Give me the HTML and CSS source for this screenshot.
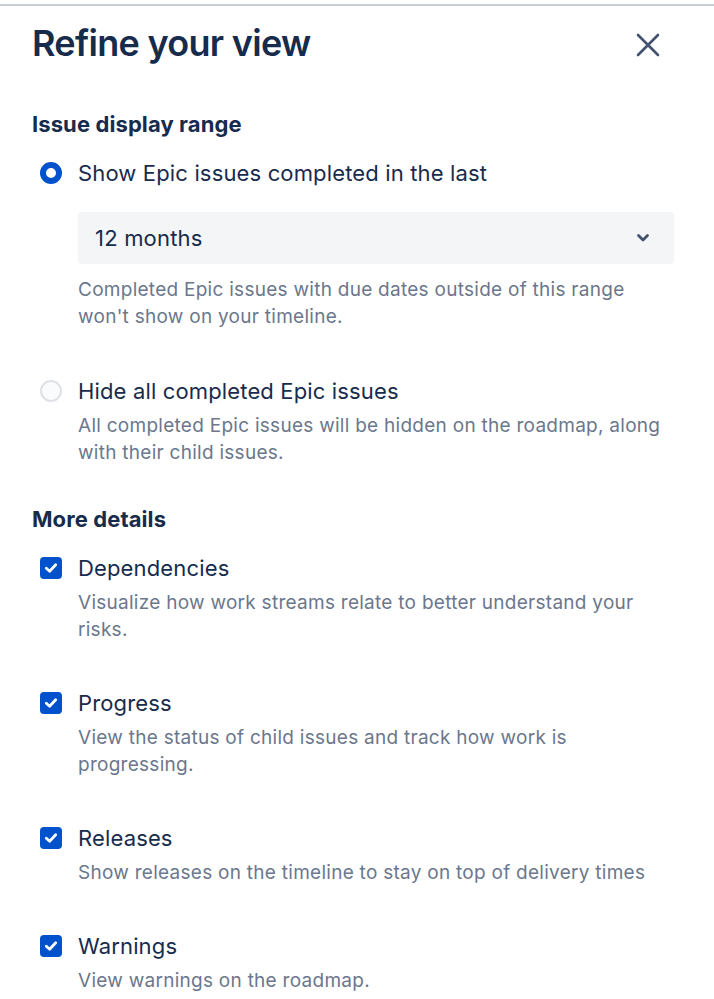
FILE: index.html
```html
<!DOCTYPE html>
<html lang="en">
<head>
<meta charset="utf-8">
<title>Refine your view</title>
<link rel="stylesheet" href="styles.css">
</head>
<body>
<div class="topline"></div>
<div class="panel">
  <header class="header">
    <h1 class="title">Refine your view</h1>
    <button class="close" aria-label="Close">
      <svg width="24" height="24" viewBox="0 0 24 24"><path d="M2 2 L22 22 M22 2 L2 22" stroke="#42526e" stroke-width="2.6" stroke-linecap="round" fill="none"/></svg>
    </button>
  </header>

  <section class="section">
    <h2 class="section-title">Issue display range</h2>
    <div class="options radio-options">
      <div class="option">
        <span class="radio radio-on"></span>
        <div class="option-body">
          <div class="option-label">Show Epic issues completed in the last</div>
          <div class="select">
            <span class="select-value">12 months</span>
            <svg class="chev" width="14" height="10" viewBox="0 0 14 10"><path d="M2.5 2.5 L7 7 L11.5 2.5" stroke="#42526e" stroke-width="2.8" stroke-linecap="round" stroke-linejoin="round" fill="none"/></svg>
          </div>
          <p class="desc">Completed Epic issues with due dates outside of this range won't show on your timeline.</p>
        </div>
      </div>
      <div class="option">
        <span class="radio"></span>
        <div class="option-body">
          <div class="option-label">Hide all completed Epic issues</div>
          <p class="desc">All completed Epic issues will be hidden on the roadmap, along with their child issues.</p>
        </div>
      </div>
    </div>
  </section>

  <section class="section">
    <h2 class="section-title">More details</h2>
    <div class="options check-options">
      <div class="option">
        <span class="checkbox"><svg width="14" height="12" viewBox="0 0 14 12"><path d="M2.3 6.3 L5.6 9.3 L11.7 2.7" stroke="#fff" stroke-width="2.8" stroke-linecap="round" stroke-linejoin="round" fill="none"/></svg></span>
        <div class="option-body">
          <div class="option-label">Dependencies</div>
          <p class="desc">Visualize how work streams relate to better understand your risks.</p>
        </div>
      </div>
      <div class="option">
        <span class="checkbox"><svg width="14" height="12" viewBox="0 0 14 12"><path d="M2.3 6.3 L5.6 9.3 L11.7 2.7" stroke="#fff" stroke-width="2.8" stroke-linecap="round" stroke-linejoin="round" fill="none"/></svg></span>
        <div class="option-body">
          <div class="option-label">Progress</div>
          <p class="desc">View the status of child issues and track how work is progressing.</p>
        </div>
      </div>
      <div class="option">
        <span class="checkbox"><svg width="14" height="12" viewBox="0 0 14 12"><path d="M2.3 6.3 L5.6 9.3 L11.7 2.7" stroke="#fff" stroke-width="2.8" stroke-linecap="round" stroke-linejoin="round" fill="none"/></svg></span>
        <div class="option-body">
          <div class="option-label">Releases</div>
          <p class="desc">Show releases on the timeline to stay on top of delivery times</p>
        </div>
      </div>
      <div class="option">
        <span class="checkbox"><svg width="14" height="12" viewBox="0 0 14 12"><path d="M2.3 6.3 L5.6 9.3 L11.7 2.7" stroke="#fff" stroke-width="2.8" stroke-linecap="round" stroke-linejoin="round" fill="none"/></svg></span>
        <div class="option-body">
          <div class="option-label">Warnings</div>
          <p class="desc">View warnings on the roadmap.</p>
        </div>
      </div>
    </div>
  </section>
</div>
</body>
</html>
```

FILE: styles.css
```css
* { box-sizing: border-box; }
html, body { margin: 0; padding: 0; background: #fff; }
body {
  font-family: Inter, "Noto Sans", "Liberation Sans", sans-serif;
  color: #172b4d;
  overflow: hidden;
}
.topline {
  height: 2px;
  margin-top: 4px;
  background: #c9ced6;
}
.panel {
  padding: 0 40px 0 32px;
}
.header {
  display: flex;
  align-items: center;
  justify-content: space-between;
  height: 74px;
}
.title {
  margin: 0;
  font-size: 36px;
  font-weight: 600;
  letter-spacing: -0.7px;
  color: #172b4d;
}
.close {
  border: 0;
  background: none;
  padding: 0;
  width: 24px;
  height: 24px;
  margin-right: 14px;
  margin-top: 4px;
  display: flex;
}
.section { margin-top: 31px; }
.section + .section { margin-top: 40px; }
.section-title {
  margin: 0 0 19px;
  font-size: 22px;
  font-weight: 700;
  line-height: 26px;
  letter-spacing: 0.1px;
}
.options {
  display: flex;
  flex-direction: column;
}
.radio-options { gap: 44px; }
.check-options { gap: 43px; }
.option {
  display: flex;
  gap: 16px;
  padding-left: 8px;
}
.radio {
  flex: none;
  width: 22px;
  height: 22px;
  border-radius: 50%;
  margin-top: 6px;
  border: 2px solid #dfe1e6;
  background: #fafbfc;
}
.radio-on {
  border: 6px solid #0052cc;
  background: #fff;
}
.checkbox {
  flex: none;
  width: 22px;
  height: 22px;
  border-radius: 4px;
  margin-top: 6px;
  background: #0052cc;
  display: flex;
  align-items: center;
  justify-content: center;
}
.option-body { flex: 1; min-width: 0; }
.option-label {
  font-size: 22px;
  line-height: 34px;
  letter-spacing: 0.15px;
  color: #172b4d;
}
.select {
  margin-top: 22px;
  height: 52px;
  border-radius: 4px;
  background: #f4f5f7;
  display: flex;
  align-items: center;
  justify-content: space-between;
  padding: 0 24px 0 17px;
}
.select-value {
  font-size: 22px;
  letter-spacing: 0.2px;
  color: #172b4d;
}
.desc {
  margin: 4px 0 0;
  font-size: 19px;
  line-height: 27px;
  letter-spacing: 0.27px;
  color: #6b778c;
}
.select + .desc { margin-top: 12px; }
```
